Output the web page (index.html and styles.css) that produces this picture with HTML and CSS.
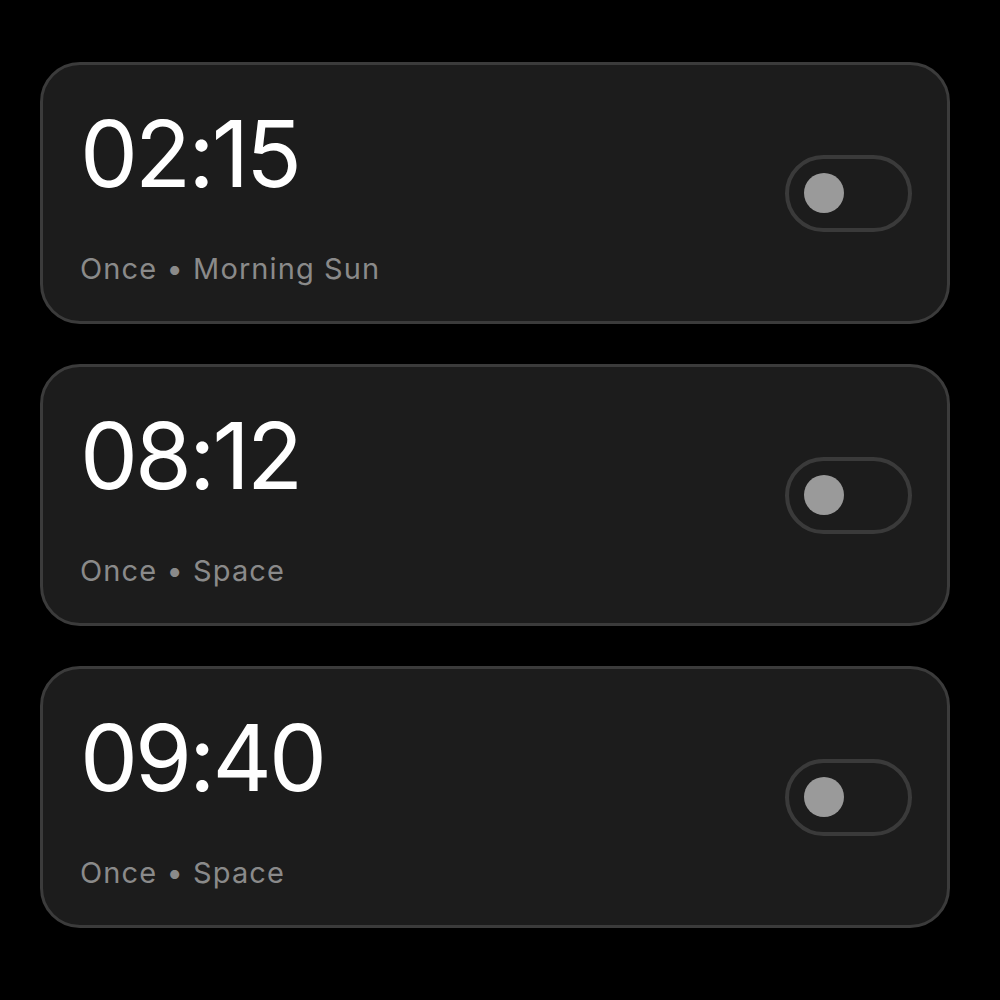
FILE: index.html
```html
<!DOCTYPE html>
<html>
<head>
<meta charset="utf-8">
<link rel="stylesheet" href="styles.css">
</head>
<body>
<div class="list">
  <div class="card">
    <div class="info">
      <div class="time">02:15</div>
      <div class="sub">Once • Morning Sun</div>
    </div>
    <div class="toggle"><div class="knob"></div></div>
  </div>
  <div class="card">
    <div class="info">
      <div class="time">08:12</div>
      <div class="sub">Once • Space</div>
    </div>
    <div class="toggle"><div class="knob"></div></div>
  </div>
  <div class="card">
    <div class="info">
      <div class="time">09:40</div>
      <div class="sub">Once • Space</div>
    </div>
    <div class="toggle"><div class="knob"></div></div>
  </div>
</div>
</body>
</html>
```
FILE: styles.css
```css
html, body {
  margin: 0;
  padding: 0;
  background: #000;
  font-family: Inter, "Noto Sans", sans-serif;
}
.list {
  display: flex;
  flex-direction: column;
  gap: 40px;
  padding: 62px 50px 0 40px;
}
.card {
  box-sizing: border-box;
  height: 262px;
  border: 3px solid #3b3b3b;
  border-radius: 40px;
  background: #1c1c1c;
  display: flex;
  align-items: center;
  justify-content: space-between;
  padding: 0 35px 0 37px;
}
.info {
  align-self: flex-start;
  padding-top: 43px;
}
.time {
  font-size: 92px;
  line-height: 92px;
  color: #fff;
  font-weight: 400;
  letter-spacing: -3px;
}
.sub {
  margin-top: 54px;
  font-size: 29px;
  line-height: 29px;
  color: #8a8a8a;
  letter-spacing: 1.1px;
}
.toggle {
  box-sizing: border-box;
  width: 127px;
  height: 77px;
  border: 4px solid #3a3a3a;
  border-radius: 40px;
  display: flex;
  align-items: center;
  padding-left: 15px;
}
.knob {
  width: 40px;
  height: 40px;
  border-radius: 50%;
  background: #9a9a9a;
}
```
